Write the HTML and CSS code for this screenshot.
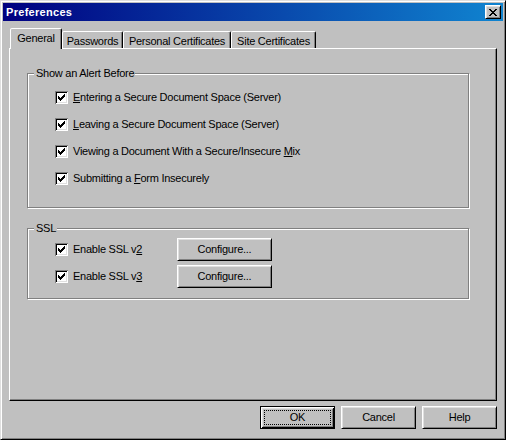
FILE: index.html
```html
<!DOCTYPE html>
<html lang="en">
<head>
<meta charset="utf-8">
<title>Preferences</title>
<link rel="stylesheet" href="styles.css">
</head>
<body>
<div class="window">
  <div class="titlebar">
    <span class="title">Preferences</span>
    <span class="close-btn">
      <svg class="close-glyph" width="8" height="7" viewBox="0 0 8 7" shape-rendering="crispEdges">
        <path d="M0 0h2v1h-2zM6 0h2v1h-2zM1 1h2v1h-2zM5 1h2v1h-2zM2 2h4v1h-4zM3 3h2v1h-2zM2 4h4v1h-4zM1 5h2v1h-2zM5 5h2v1h-2zM0 6h2v1h-2zM6 6h2v1h-2z" fill="#000"/>
      </svg>
    </span>
  </div>

  <div class="tabctl">
    <div class="tabs">
      <div class="tab tab-active tab-general">General</div>
      <div class="tab tab-passwords">Passwords</div>
      <div class="tab tab-personal">Personal Certificates</div>
      <div class="tab tab-site">Site Certificates</div>
    </div>
    <div class="panel">
      <div class="group group-alert">
        <div class="group-title">Show an Alert Before</div>
        <div class="rows">
          <div class="row">
            <span class="check"><span class="box"><svg width="13" height="13" viewBox="0 0 13 13" shape-rendering="crispEdges"><path d="M9 3h1v1h-1zM8 4h2v1h-2zM3 5h1v1h-1zM7 5h3v1h-3zM3 6h2v1h-2zM6 6h3v1h-3zM3 7h5v1h-5zM4 8h3v1h-3zM5 9h1v1h-1z" fill="#000"/></svg></span><span class="label"><u>E</u>ntering a Secure Document Space (Server)</span></span>
          </div>
          <div class="row">
            <span class="check"><span class="box"><svg width="13" height="13" viewBox="0 0 13 13" shape-rendering="crispEdges"><path d="M9 3h1v1h-1zM8 4h2v1h-2zM3 5h1v1h-1zM7 5h3v1h-3zM3 6h2v1h-2zM6 6h3v1h-3zM3 7h5v1h-5zM4 8h3v1h-3zM5 9h1v1h-1z" fill="#000"/></svg></span><span class="label"><u>L</u>eaving a Secure Document Space (Server)</span></span>
          </div>
          <div class="row">
            <span class="check"><span class="box"><svg width="13" height="13" viewBox="0 0 13 13" shape-rendering="crispEdges"><path d="M9 3h1v1h-1zM8 4h2v1h-2zM3 5h1v1h-1zM7 5h3v1h-3zM3 6h2v1h-2zM6 6h3v1h-3zM3 7h5v1h-5zM4 8h3v1h-3zM5 9h1v1h-1z" fill="#000"/></svg></span><span class="label">Viewing a Document With a Secure/Insecure <u>M</u>ix</span></span>
          </div>
          <div class="row">
            <span class="check"><span class="box"><svg width="13" height="13" viewBox="0 0 13 13" shape-rendering="crispEdges"><path d="M9 3h1v1h-1zM8 4h2v1h-2zM3 5h1v1h-1zM7 5h3v1h-3zM3 6h2v1h-2zM6 6h3v1h-3zM3 7h5v1h-5zM4 8h3v1h-3zM5 9h1v1h-1z" fill="#000"/></svg></span><span class="label">Submitting a <u>F</u>orm Insecurely</span></span>
          </div>
        </div>
      </div>

      <div class="group group-ssl">
        <div class="group-title">SSL</div>
        <div class="rows">
          <div class="row">
            <span class="check check-ssl"><span class="box"><svg width="13" height="13" viewBox="0 0 13 13" shape-rendering="crispEdges"><path d="M9 3h1v1h-1zM8 4h2v1h-2zM3 5h1v1h-1zM7 5h3v1h-3zM3 6h2v1h-2zM6 6h3v1h-3zM3 7h5v1h-5zM4 8h3v1h-3zM5 9h1v1h-1z" fill="#000"/></svg></span><span class="label">Enable SSL v<u>2</u></span></span>
            <span class="btn btn-config">Configure...</span>
          </div>
          <div class="row">
            <span class="check check-ssl"><span class="box"><svg width="13" height="13" viewBox="0 0 13 13" shape-rendering="crispEdges"><path d="M9 3h1v1h-1zM8 4h2v1h-2zM3 5h1v1h-1zM7 5h3v1h-3zM3 6h2v1h-2zM6 6h3v1h-3zM3 7h5v1h-5zM4 8h3v1h-3zM5 9h1v1h-1z" fill="#000"/></svg></span><span class="label">Enable SSL v<u>3</u></span></span>
            <span class="btn btn-config">Configure...</span>
          </div>
        </div>
      </div>
    </div>
  </div>

  <div class="actions">
    <span class="btn btn-default"><span class="focus">OK</span></span>
    <span class="btn">Cancel</span>
    <span class="btn">Help</span>
  </div>
</div>
</body>
</html>
```

FILE: styles.css
```css
* {
  box-sizing: border-box;
}

html,
body {
  margin: 0;
  padding: 0;
}

body {
  width: 506px;
  height: 440px;
  overflow: hidden;
  background: #c0c0c0;
  color: #000;
  font-family: "Liberation Sans", Arial, sans-serif;
  font-size: 11px;
  line-height: 13px;
  letter-spacing: -0.25px;
}

u {
  text-decoration: underline;
  text-underline-offset: 1px;
}

.window {
  width: 506px;
  height: 440px;
  display: flex;
  flex-direction: column;
  padding: 2px;
  background: #c0c0c0;
  border: 1px solid;
  border-color: #dfdfdf #000 #000 #dfdfdf;
  box-shadow: inset 1px 1px #fff, inset -1px -1px #808080;
}

/* Title bar */
.titlebar {
  flex: none;
  height: 18px;
  display: flex;
  align-items: center;
  justify-content: space-between;
  padding: 0 2px 0 3px;
  background: linear-gradient(to right, #000080, #1084d0);
}

.title {
  color: #fff;
  font-weight: bold;
  letter-spacing: 0.3px;
}

.close-btn {
  width: 16px;
  height: 14px;
  display: flex;
  align-items: center;
  justify-content: center;
  background: #c0c0c0;
  border: 1px solid;
  border-color: #fff #000 #000 #fff;
  box-shadow: inset 1px 1px #dfdfdf, inset -1px -1px #808080;
}

.close-glyph {
  display: block;
}

/* Tabs */
.tabctl {
  flex: none;
  margin: 7px 6px 0;
}

.tabs {
  display: flex;
  align-items: flex-end;
  height: 20px;
  padding-left: 1px;
}

.tab {
  height: 17px;
  padding-top: 3px;
  text-align: center;
  white-space: nowrap;
  border: 1px solid;
  border-bottom: none;
  border-color: #fff #000 transparent #fff;
  border-radius: 2px 2px 0 0;
  box-shadow: inset -1px 0 #808080;
  background: #c0c0c0;
}

.tab-active {
  height: 21px;
  margin-bottom: -1px;
  position: relative;
  z-index: 1;
}

.tab-general { width: 52px; }
.tab-passwords { width: 61px; }
.tab-personal { width: 108px; }
.tab-site { width: 85px; }

.panel {
  height: 353px;
  padding: 24px 27px 0 17px;
  border: 1px solid;
  border-color: #fff #000 #000 #fff;
  box-shadow: inset -1px -1px #808080;
}

/* Group boxes */
.group {
  border: 1px solid #808080;
  box-shadow: inset 1px 1px #fff, 1px 1px #fff;
}

.group-title {
  display: table;
  margin: -7px 0 0 6px;
  padding: 0 1px 0 2px;
  background: #c0c0c0;
  white-space: nowrap;
}

.rows {
  padding-left: 27px;
}

.group-alert .rows {
  margin-top: 4px;
  padding-bottom: 15px;
}

.group-ssl {
  margin-top: 20px;
}

.group-ssl .rows {
  margin-top: 1px;
  padding-bottom: 8px;
}

.row {
  height: 27px;
  display: flex;
  align-items: center;
}

.check {
  display: flex;
  align-items: center;
  gap: 5px;
  white-space: nowrap;
}

.check-ssl {
  width: 122px;
  flex: none;
}

.box {
  width: 13px;
  height: 13px;
  flex: none;
  background: #fff;
  box-shadow: inset 1px 1px #808080, inset -1px -1px #fff, inset 2px 2px #000, inset -2px -2px #dfdfdf;
}

.box svg {
  display: block;
}

/* Buttons */
.btn {
  width: 75px;
  height: 23px;
  flex: none;
  display: flex;
  align-items: center;
  justify-content: center;
  background: #c0c0c0;
  border: 1px solid;
  border-color: #fff #000 #000 #fff;
  box-shadow: inset 1px 1px #dfdfdf, inset -1px -1px #808080;
  white-space: nowrap;
}

.btn-config {
  width: 95px;
}

.btn-default {
  border-color: #000;
  box-shadow: inset 1px 1px #fff, inset -1px -1px #000, inset 2px 2px #dfdfdf, inset -2px -2px #808080;
}

.focus {
  flex: 1;
  align-self: stretch;
  margin: 3px;
  display: flex;
  align-items: center;
  justify-content: center;
  border: 1px dotted #000;
}

.actions {
  flex: none;
  display: flex;
  justify-content: flex-end;
  gap: 6px;
  margin-top: 5px;
  padding-right: 6px;
}
```
